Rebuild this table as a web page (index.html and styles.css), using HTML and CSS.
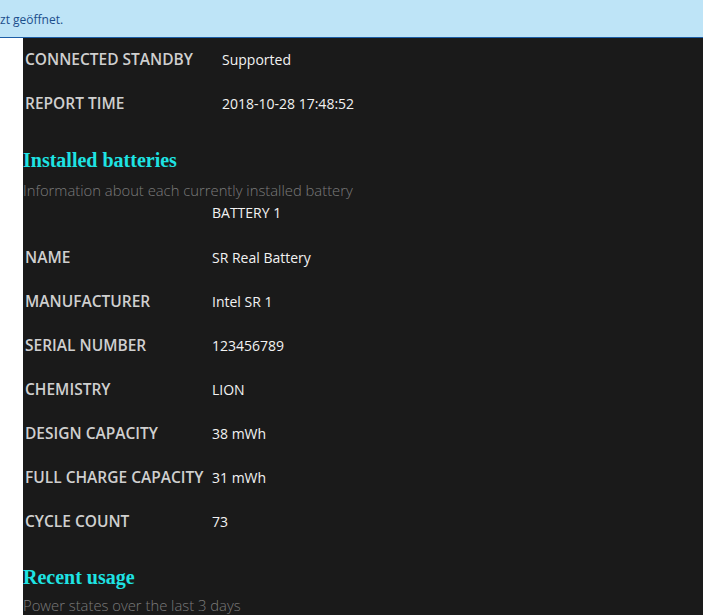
FILE: index.html
```html
<!DOCTYPE html>
<html lang="de">
  <head>
    <meta charset="UTF-8" />
    <meta name="viewport" content="width=device-width, initial-scale=1.0" />
    <title>Battery report</title>
    <link rel="stylesheet" href="styles.css">
  </head>
  <body>
    <div class="info-bar">zt geöffnet.</div>

    <div class="page">
      <div class="gutter"></div>
      <div class="report">
        <div class="table system">
          <div class="row">
            <span class="label">CONNECTED STANDBY</span>
            <span class="value">Supported</span>
          </div>
          <div class="row">
            <span class="label">REPORT TIME</span>
            <span class="value">2018-10-28 17:48:52</span>
          </div>
        </div>

        <h2>Installed batteries</h2>
        <div class="description">Information about each currently installed battery</div>

        <div class="table batteries">
          <div class="row head">
            <span class="label"></span>
            <span class="value">BATTERY 1</span>
          </div>
          <div class="row">
            <span class="label">NAME</span>
            <span class="value">SR Real Battery</span>
          </div>
          <div class="row">
            <span class="label">MANUFACTURER</span>
            <span class="value">Intel SR 1</span>
          </div>
          <div class="row">
            <span class="label">SERIAL NUMBER</span>
            <span class="value">123456789</span>
          </div>
          <div class="row">
            <span class="label">CHEMISTRY</span>
            <span class="value">LION</span>
          </div>
          <div class="row">
            <span class="label">DESIGN CAPACITY</span>
            <span class="value">38 mWh</span>
          </div>
          <div class="row">
            <span class="label">FULL CHARGE CAPACITY</span>
            <span class="value">31 mWh</span>
          </div>
          <div class="row">
            <span class="label">CYCLE COUNT</span>
            <span class="value">73</span>
          </div>
        </div>

        <h2 class="usage">Recent usage</h2>
        <div class="description">Power states over the last 3 days</div>
      </div>
    </div>
  </body>
</html>
```

FILE: styles.css
```css
body {
  margin: 0;
  background-color: #ffffff;
  font-family: "Open Sans", "Noto Sans", sans-serif;
  overflow: hidden;
}
.info-bar {
  height: 38px;
  box-sizing: border-box;
  padding-top: 12px;
  background-color: #bee4f7;
  border-bottom: 1px solid #1d5ea6;
  color: #1b4f8c;
  font-size: 12px;
  line-height: 16px;
  white-space: nowrap;
}
.page {
  display: flex;
  height: 600px;
}
.gutter {
  width: 23px;
  flex-shrink: 0;
}
.report {
  flex: 1;
  background-color: #1a1a1a;
}
.table {
  display: flex;
  flex-direction: column;
}
.system {
  margin-top: -1px;
}
.row {
  display: flex;
  align-items: baseline;
  box-sizing: border-box;
  height: 44px;
  padding: 12px 0 0 2px;
  font-size: 14px;
  line-height: 20px;
}
.batteries .row.head {
  height: 26px;
  padding-top: 3px;
  margin-bottom: 9px;
}
.label {
  font-size: 15.5px;
  font-weight: 600;
  color: #cfcfcf;
  flex-shrink: 0;
}
.value {
  color: #f2f2f2;
}
.system .label {
  width: 197px;
}
.batteries .label {
  width: 187px;
}
h2 {
  margin: 24px 0 0;
  font-family: "Liberation Serif", "Times New Roman", serif;
  font-size: 20px;
  line-height: 22px;
  font-weight: bold;
  color: #1ee3e3;
}
h2.usage {
  margin-top: 23px;
}
.description {
  margin-top: 9px;
  font-size: 14.8px;
  line-height: 20px;
  font-weight: 300;
  color: #7a7a7a;
}
.usage + .description {
  margin-top: 7px;
}
```
